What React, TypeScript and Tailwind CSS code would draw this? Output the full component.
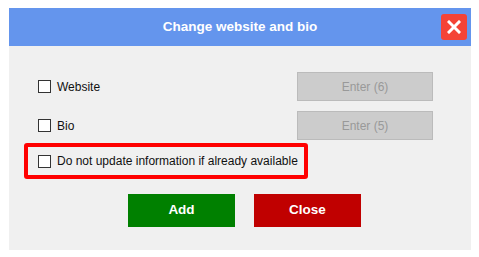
import React from 'react';

const font = { fontFamily: '"Liberation Sans", Arial, sans-serif' };

const Box: React.FC = () => (
  <span className="inline-block w-[13px] h-[13px] border border-[#333] bg-white shrink-0" />
);

const Row: React.FC<{ label: string; enter?: string }> = ({ label, enter }) => (
  <div className="flex items-center h-[29px]">
    <div className="flex items-center gap-[6px] flex-1 pl-[29px]">
      <Box />
      <span className="text-[12px] text-[#111]">{label}</span>
    </div>
    {enter && (
      <div className="w-[136px] h-[29px] mr-[38px] bg-[#cccccc] border border-[#bbbbbb] flex items-center justify-center text-[12px] text-[#999]">
        {enter}
      </div>
    )}
  </div>
);

export default function App() {
  return (
    <div className="w-[479px] h-[257px] bg-white pt-[8px] pl-[9px]" style={font}>
      <div className="w-[462px]">
        <div className="relative h-[38px] bg-[#6495ed] flex items-center justify-center">
          <span className="text-white font-bold text-[13.5px]">Change website and bio</span>
          <button className="absolute right-[4px] top-[6px] w-[26px] h-[26px] rounded-[3px] bg-[#f44336] flex items-center justify-center">
            <svg width="14" height="14" viewBox="0 0 14 14">
              <path d="M2 2L12 12M12 2L2 12" stroke="white" strokeWidth="3" strokeLinecap="square" />
            </svg>
          </button>
        </div>
        <div className="h-[204px] bg-[#f0f0f0] pt-[26px]">
          <Row label="Website" enter="Enter (6)" />
          <div className="h-[10px]" />
          <Row label="Bio" enter="Enter (5)" />
          <div className="ml-[15px] mt-[3px] w-[284px] h-[36px] border-[4px] border-[#ff0000] rounded-[3px] flex items-center gap-[6px] pl-[10px]">
            <Box />
            <span className="text-[12px] text-[#111] whitespace-nowrap">Do not update information if already available</span>
          </div>
          <div className="flex gap-[19px] ml-[119px] mt-[15px]">
            <button className="w-[107px] h-[33px] bg-[#008000] text-white font-bold text-[13.5px]">Add</button>
            <button className="w-[107px] h-[33px] bg-[#c00000] text-white font-bold text-[13.5px]">Close</button>
          </div>
        </div>
      </div>
    </div>
  );
}
